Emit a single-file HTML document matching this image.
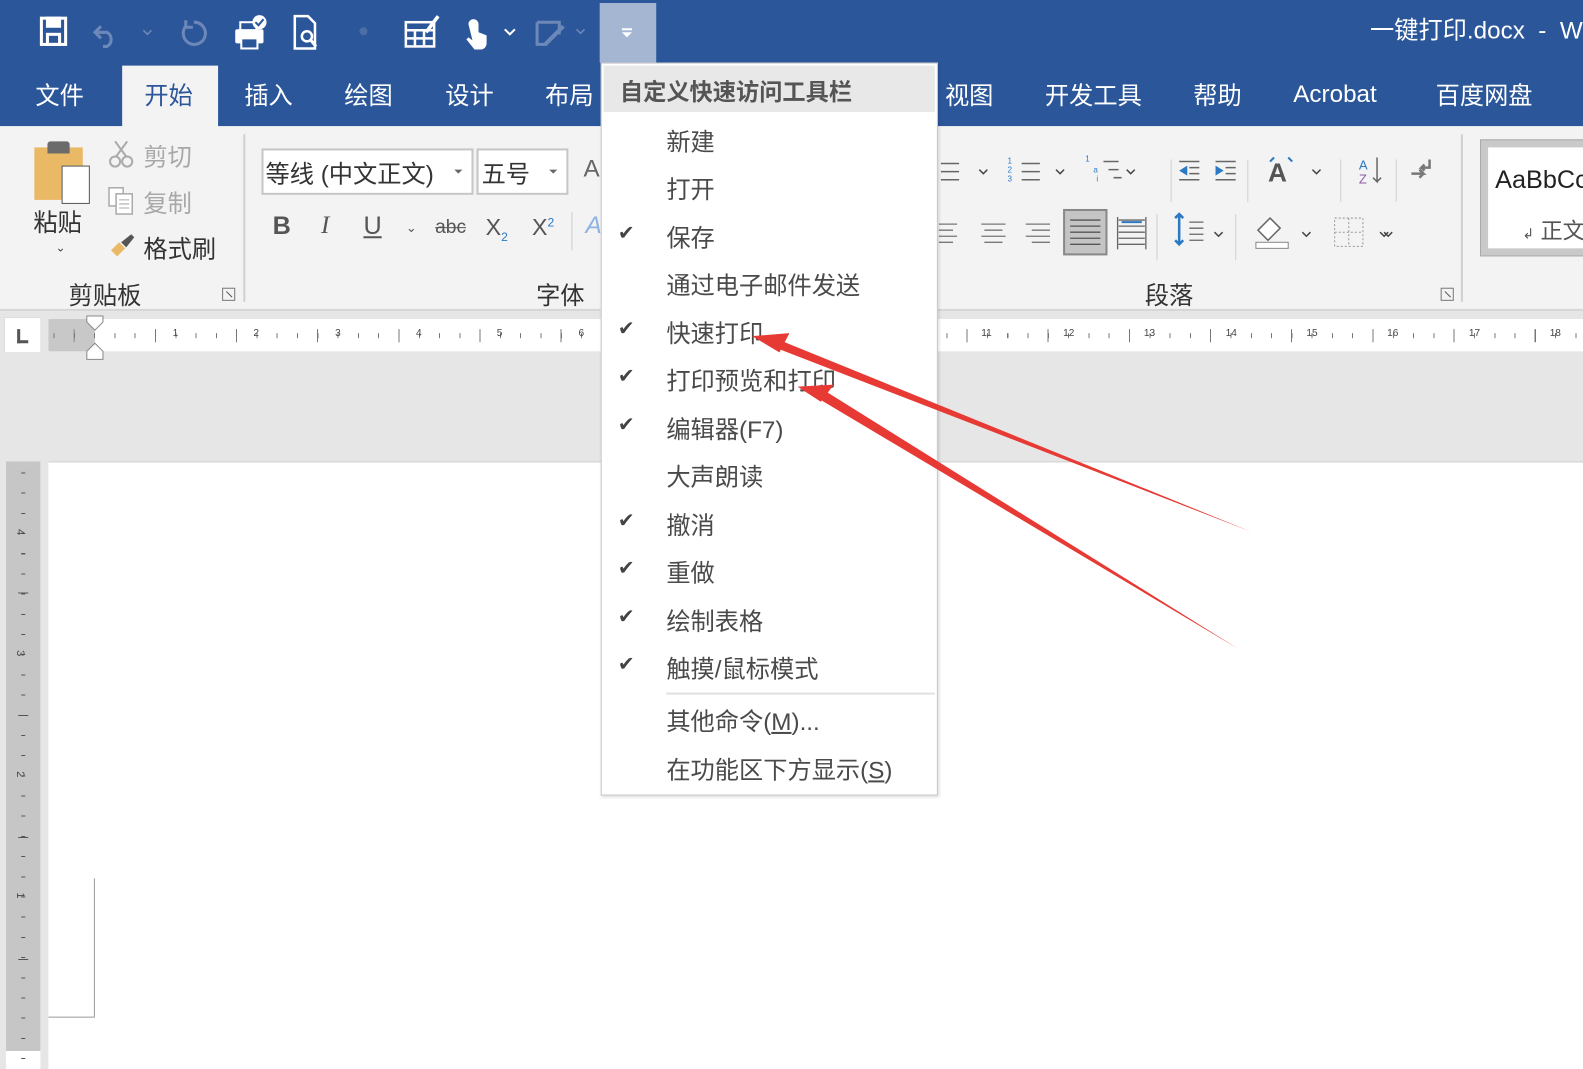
<!DOCTYPE html>
<html><head><meta charset="utf-8"><style>
*{margin:0;padding:0;box-sizing:border-box}
html,body{width:1583px;height:1069px;overflow:hidden;background:#e6e6e6}
#w{position:absolute;left:0;top:0;width:1568px;height:1059px;transform:scale(1.00957);transform-origin:0 0;font-family:"Liberation Sans","Noto Sans CJK SC",sans-serif}
.a{position:absolute;white-space:nowrap}
.tab{position:absolute;top:75px;font-size:24px;color:#fff}
.gl{font-size:24px;color:#333}
.mi{position:absolute;left:64px;font-size:24px;color:#4a4a4a;margin-top:-3px}
.ck{position:absolute;left:16px;font-size:20px;color:#444;margin-top:-1px}
.num{position:absolute;top:325px;font-size:10px;color:#444}
.dl{position:absolute;width:13px;height:13px;border:1px solid #777}
.dl:after{content:"";position:absolute;left:2px;top:5px;width:8px;height:1px;background:#555;transform:rotate(45deg)}
</style></head><body><div id="w">
<div class="a" style="left:0;top:0;width:1568px;height:125px;background:#2b579a"></div>
<svg class="a" style="left:30px;top:12px" width="580" height="40">
<g fill="none" stroke="#fff" stroke-width="3"><rect x="11" y="6" width="24" height="26"/><rect x="17" y="6" width="12" height="8" fill="#fff"/><rect x="17" y="22" width="12" height="10"/></g>
<path d="M70 14 l-6 6 6 6 M64 20 h12 a8 8 0 0 1 0 14 h-4" fill="none" stroke="#6d88b8" stroke-width="3"/>
<path d="M112 18 l4 4 4-4" fill="none" stroke="#6d88b8" stroke-width="1.5"/>
<path d="M162 10 a11 11 0 1 1 -8 4 M154 8 v7 h7" fill="none" stroke="#6d88b8" stroke-width="3"/>
<g fill="#fff"><rect x="203" y="17" width="28" height="14" rx="2"/><rect x="208" y="10" width="16" height="8" fill="none" stroke="#fff" stroke-width="2"/><rect x="209" y="26" width="16" height="10" fill="#2b579a" stroke="#fff" stroke-width="2"/><circle cx="227" cy="10" r="7"/></g>
<path d="M223 10 l3 3 5-6" stroke="#2b579a" stroke-width="2" fill="none"/>
<path d="M262 4 h13 l7 7 v25 h-20z" fill="none" stroke="#fff" stroke-width="2.5"/><circle cx="274" cy="24" r="5" fill="none" stroke="#fff" stroke-width="2.5"/><path d="M278 28 l5 6" stroke="#fff" stroke-width="3"/>
<circle cx="330" cy="19" r="4" fill="#4c6ea6"/>
<g stroke="#fff" stroke-width="2.5" fill="none"><rect x="372" y="10" width="28" height="24"/><path d="M372 18h28M381 18v16M390 18v16M372 26h28"/><path d="M392 20 l12-16" stroke-width="3.5"/></g>
<path d="M434 12 a5 5 0 0 1 10 0 v8 l8 3 v8 a6 6 0 0 1 -6 6 h-6 l-8 -10 2-2 4 3z" fill="#fff"/>
<path d="M470 17 l5 5 5-5" stroke="#fff" stroke-width="2" fill="none"/>
<path d="M502 10 h22 v12 M502 10 v22 h10" fill="none" stroke="#6d88b8" stroke-width="3"/><path d="M510 32 l18-18" stroke="#6d88b8" stroke-width="4"/>
<path d="M541 17 l4 4 4-4" fill="none" stroke="#6d88b8" stroke-width="1.5"/>
</svg>
<div class="a" style="left:594px;top:3px;width:56px;height:59px;background:#a4b6d2"></div>
<div class="a" style="left:616px;top:28px;width:10px;height:2px;background:#fff"></div>
<div class="a" style="left:616px;top:32px;width:0;height:0;border-left:5px solid transparent;border-right:5px solid transparent;border-top:5px solid #fff"></div>
<div class="a" style="left:1357px;top:10px;font-size:24px;color:#fff">一键打印.docx &nbsp;- &nbsp;W</div>
<div class="a" style="left:121px;top:65px;width:95px;height:61px;background:#f3f3f3"></div>
<div class="tab" style="left:35px">文件</div>
<div class="tab" style="left:143px;color:#2b579a">开始</div>
<div class="tab" style="left:242px">插入</div>
<div class="tab" style="left:341px">绘图</div>
<div class="tab" style="left:441px">设计</div>
<div class="tab" style="left:540px">布局</div>
<div class="tab" style="left:936px">视图</div>
<div class="tab" style="left:1035px">开发工具</div>
<div class="tab" style="left:1182px">帮助</div>
<div class="tab" style="left:1281px;top:80px">Acrobat</div>
<div class="tab" style="left:1422px">百度网盘</div>
<div class="a" style="left:0;top:125px;width:1568px;height:183px;background:#f3f3f3;border-bottom:2px solid #d6d6d6"></div>
<div class="a" style="left:34px;top:146px;width:48px;height:52px;background:#e9b966"></div>
<div class="a" style="left:47px;top:140px;width:22px;height:12px;background:#6b6b6b;border-radius:3px 3px 0 0"></div>
<div class="a" style="left:61px;top:164px;width:28px;height:38px;background:#fff;border:1.5px solid #555"></div>
<div class="a gl" style="left:33px;top:201px">粘贴</div>
<div class="a" style="left:55px;top:238px;font-size:12px;color:#444">⌄</div>
<svg class="a" style="left:106px;top:138px" width="30" height="30"><circle cx="8" cy="22" r="5" fill="none" stroke="#aaa" stroke-width="2"/><circle cx="20" cy="22" r="5" fill="none" stroke="#aaa" stroke-width="2"/><path d="M9 17 L20 2 M19 17 L8 2" stroke="#aaa" stroke-width="2"/></svg>
<div class="a" style="left:142px;top:136px;font-size:24px;color:#a8a8a8">剪切</div>
<svg class="a" style="left:106px;top:184px" width="30" height="30"><rect x="2" y="2" width="14" height="18" fill="#fff" stroke="#aaa" stroke-width="1.5"/><rect x="9" y="8" width="16" height="20" fill="#fff" stroke="#aaa" stroke-width="1.5"/><path d="M12 14h10M12 18h10M12 22h10" stroke="#aaa"/></svg>
<div class="a" style="left:142px;top:182px;font-size:24px;color:#a8a8a8">复制</div>
<svg class="a" style="left:106px;top:230px" width="30" height="30"><path d="M4 18 l8 -8 6 6 -8 8z" fill="#e9b966"/><path d="M14 10 l10 -8 3 3 -8 10z" fill="#555"/></svg>
<div class="a gl" style="left:142px;top:227px">格式刷</div>
<div class="a gl" style="left:68px;top:273px">剪贴板</div>
<div class="dl" style="left:220px;top:285px"></div>
<div class="a" style="left:241px;top:133px;width:2px;height:166px;background:#d0d0d0"></div>
<div class="a" style="left:259px;top:147px;width:210px;height:46px;background:#fff;border:2px solid #c6c6c6"></div>
<div class="a gl" style="left:263px;top:153px">等线 (中文正文)</div>
<div class="a" style="left:450px;top:168px;border-left:4px solid transparent;border-right:4px solid transparent;border-top:4px solid #666"></div>
<div class="a" style="left:472px;top:147px;width:91px;height:46px;background:#fff;border:2px solid #c6c6c6"></div>
<div class="a gl" style="left:477px;top:153px">五号</div>
<div class="a" style="left:544px;top:168px;border-left:4px solid transparent;border-right:4px solid transparent;border-top:4px solid #666"></div>
<div class="a gl" style="left:578px;top:154px;color:#666">A</div>
<div class="a" style="left:270px;top:210px;font-size:25px;font-weight:bold;color:#555">B</div>
<div class="a" style="left:318px;top:210px;font-size:25px;font-style:italic;font-family:'Liberation Serif',serif;color:#555">I</div>
<div class="a" style="left:360px;top:210px;font-size:25px;text-decoration:underline;color:#555">U</div>
<div class="a" style="left:402px;top:218px;font-size:13px;color:#555">⌄</div>
<div class="a" style="left:431px;top:215px;font-size:19px;text-decoration:line-through;color:#555">abc</div>
<div class="a" style="left:481px;top:212px;font-size:23px;color:#555">X<sub style="font-size:12px;color:#2b79c2">2</sub></div>
<div class="a" style="left:527px;top:212px;font-size:23px;color:#555">X<sup style="font-size:12px;color:#2b79c2">2</sup></div>
<div class="a" style="left:566px;top:210px;width:1px;height:38px;background:#ccc"></div>
<div class="a" style="left:580px;top:210px;font-size:24px;font-style:italic;color:#8db3e2">A</div>
<div class="a gl" style="left:531px;top:273px">字体</div>
<svg class="a" style="left:928px;top:140px" width="520" height="125">
<g stroke="#666" stroke-width="1.5"><path d="M4 22h18M4 30h18M4 38h18"/><path d="M84 22h18M84 30h18M84 38h18"/><path d="M165 20h15M170 28h10M175 36h8"/></g>
<g fill="none" stroke="#444" stroke-width="1.5"><path d="M42 28l4 4 4-4M118 28l4 4 4-4M188 28l4 4 4-4M372 28l4 4 4-4M443 90l4 4 4-4M275 90l4 4 4-4M362 90l4 4 4-4M439 90l4 4 4-4"/></g>
<text x="70" y="22" font-size="8" fill="#2b79c2">1</text><text x="70" y="31" font-size="8" fill="#2b79c2">2</text><text x="70" y="40" font-size="8" fill="#2b79c2">3</text>
<text x="147" y="20" font-size="8" fill="#2b79c2">1</text><text x="155" y="31" font-size="8" fill="#2b79c2">a</text><text x="158" y="40" font-size="8" fill="#2b79c2">i</text>
<path d="M232 18v42" stroke="#d0d0d0"/>
<g stroke="#666" stroke-width="1.5"><path d="M240 20h20M250 26h10M250 32h10M240 38h20M276 20h20M286 26h10M286 32h10M276 38h20"/></g>
<path d="M240 29l8-5v10z" fill="#2b79c2"/><path d="M284 29l-8-5v10z" fill="#2b79c2"/>
<path d="M308 18v42" stroke="#d0d0d0"/>
<text x="328" y="40" font-size="26" font-weight="bold" fill="#555">A</text><path d="M330 20l4-4M352 20l-4-4" stroke="#2b79c2" stroke-width="2"/>
<path d="M400 18v42" stroke="#d0d0d0"/>
<text x="418" y="28" font-size="13" fill="#2b79c2">A</text><text x="418" y="42" font-size="13" fill="#8e5ba6">Z</text><path d="M436 16v24l-4-4M436 40l4-4" stroke="#666" fill="none" stroke-width="1.5"/>
<path d="M455 18v42" stroke="#d0d0d0"/>
<path d="M470 32h12l-4-4M482 32l-4 4M488 18v8h-8l3-3M480 26l3 3" stroke="#777" stroke-width="2.5" fill="none"/>
<g stroke="#777" stroke-width="1.3"><path d="M2 82h18M2 88h14M2 94h18M2 100h14"/><path d="M44 82h24M47 88h18M44 94h24M47 100h18"/><path d="M88 82h24M94 88h18M88 94h24M94 100h18"/></g>
<rect x="126" y="68" width="42" height="44" fill="#c4c4c4" stroke="#888" stroke-width="2"/>
<g stroke="#555" stroke-width="1.3"><path d="M132 78h30M132 84h30M132 90h30M132 96h30M132 102h30"/></g>
<g stroke="#666" stroke-width="1.3"><path d="M180 78h26M180 84h26M180 90h26M180 96h26M180 102h26M179 75v32M207 75v32"/></g><path d="M183 80h20" stroke="#2b79c2" stroke-width="2"/>
<path d="M218 72v46" stroke="#d0d0d0"/>
<path d="M240 72v30M236 76l4-4 4 4M236 98l4 4 4-4" stroke="#2b79c2" stroke-width="2.5" fill="none"/><path d="M250 80h14M250 86h14M250 92h14M250 98h14" stroke="#666" stroke-width="1.3"/>
<path d="M296 72v46" stroke="#d0d0d0"/>
<path d="M318 88l12-12 10 10-12 12z" fill="#fff" stroke="#666" stroke-width="1.5"/><rect x="316" y="100" width="32" height="6" fill="#fff" stroke="#888"/>
<rect x="394" y="76" width="28" height="28" fill="none" stroke="#999" stroke-dasharray="2 2"/><path d="M408 76v28M394 90h28" stroke="#999" stroke-dasharray="2 2"/>
</svg>
<div class="a gl" style="left:1134px;top:273px">段落</div>
<div class="dl" style="left:1427px;top:285px"></div>
<div class="a" style="left:1447px;top:133px;width:2px;height:166px;background:#d0d0d0"></div>
<div class="a" style="left:1466px;top:138px;width:110px;height:116px;background:#c9c9c9;border:1px solid #aaa"></div>
<div class="a" style="left:1474px;top:146px;width:100px;height:100px;background:#fff"></div>
<div class="a" style="left:1481px;top:164px;font-size:25px;color:#222">AaBbCc</div>
<div class="a" style="left:1508px;top:211px;font-size:22px;color:#555"><span style="font-size:14px">↲</span> 正文</div>
<div class="a" style="left:4px;top:314px;width:37px;height:36px;background:#fff;border:1px solid #ddd"></div>
<div class="a" style="left:17px;top:326px;width:3px;height:14px;background:#555"></div>
<div class="a" style="left:17px;top:337px;width:11px;height:3px;background:#555"></div>
<div class="a" style="left:48px;top:316px;width:1520px;height:32px;background:#fff"></div>
<div class="a" style="left:48px;top:316px;width:46px;height:32px;background:#c8c8c8"></div>
<div class="a" style="left:53px;top:330px;width:1515px;height:5px;background:repeating-linear-gradient(90deg,#777 0 1px,transparent 1px 20.1px)"></div>
<div class="a" style="left:73px;top:326px;width:1495px;height:13px;background:repeating-linear-gradient(90deg,#777 0 1px,transparent 1px 80.4px)"></div>
<svg class="a" style="left:85px;top:312px" width="18" height="46"><path d="M1 1h16v6l-8 8-8-8z" fill="#fff" stroke="#888"/><path d="M1 36l8-8 8 8v8h-16z" fill="#fff" stroke="#888"/></svg>
<div class="num" style="left:171px">1</div><div class="num" style="left:251px">2</div><div class="num" style="left:332px">3</div><div class="num" style="left:412px">4</div><div class="num" style="left:492px">5</div><div class="num" style="left:573px">6</div>
<div class="num" style="left:972px">11</div><div class="num" style="left:1053px">12</div><div class="num" style="left:1133px">13</div><div class="num" style="left:1214px">14</div><div class="num" style="left:1294px">15</div><div class="num" style="left:1374px">16</div><div class="num" style="left:1455px">17</div><div class="num" style="left:1535px">18</div>
<div class="a" style="left:48px;top:457px;width:1520px;height:602px;background:#fff;border-top:1px solid #ccc"></div>
<div class="a" style="left:6px;top:457px;width:34px;height:602px;background:#fff"></div>
<div class="a" style="left:6px;top:457px;width:34px;height:584px;background:#c6c6c6"></div>
<div class="a" style="left:21px;top:457px;width:4px;height:602px;background:repeating-linear-gradient(180deg,transparent 0 11px,#555 11px 12px,transparent 12px 20px)"></div>
<div class="a" style="left:18px;top:467px;width:10px;height:560px;background:repeating-linear-gradient(180deg,transparent 0 120px,#555 120px 121px)"></div>
<div class="a" style="left:17px;top:521px;font-size:11px;color:#444;transform:rotate(90deg)">4</div>
<div class="a" style="left:17px;top:641px;font-size:11px;color:#444;transform:rotate(90deg)">3</div>
<div class="a" style="left:17px;top:761px;font-size:11px;color:#444;transform:rotate(90deg)">2</div>
<div class="a" style="left:17px;top:881px;font-size:11px;color:#444;transform:rotate(90deg)">1</div>
<div class="a" style="left:93px;top:870px;width:1px;height:137px;background:#999"></div>
<div class="a" style="left:48px;top:1007px;width:46px;height:1px;background:#999"></div>
<div class="a" style="left:595px;top:62px;width:334px;height:726px;background:#fff;border:1px solid #c6c6c6;box-shadow:1px 2px 3px rgba(0,0,0,.15)">
<div class="a" style="left:2px;top:2px;width:328px;height:46px;background:#e8e8e8"></div>
<div class="a" style="left:18px;top:9px;font-size:23px;font-weight:bold;color:#555">自定义快速访问工具栏</div>
<div class="mi" style="top:61px">新建</div>
<div class="mi" style="top:108px">打开</div>
<div class="ck" style="top:156px">✔</div><div class="mi" style="top:156px">保存</div>
<div class="mi" style="top:203px">通过电子邮件发送</div>
<div class="ck" style="top:251px">✔</div><div class="mi" style="top:251px">快速打印</div>
<div class="ck" style="top:298px">✔</div><div class="mi" style="top:298px">打印预览和打印</div>
<div class="ck" style="top:346px">✔</div><div class="mi" style="top:346px">编辑器(F7)</div>
<div class="mi" style="top:393px">大声朗读</div>
<div class="ck" style="top:441px">✔</div><div class="mi" style="top:441px">撤消</div>
<div class="ck" style="top:488px">✔</div><div class="mi" style="top:488px">重做</div>
<div class="ck" style="top:536px">✔</div><div class="mi" style="top:536px">绘制表格</div>
<div class="ck" style="top:583px">✔</div><div class="mi" style="top:583px">触摸/鼠标模式</div>
<div class="a" style="left:64px;top:623px;width:266px;height:2px;background:#e0e0e0"></div>
<div class="mi" style="top:635px">其他命令(<u>M</u>)...</div>
<div class="mi" style="top:683px">在功能区下方显示(<u>S</u>)</div>
</div>
<svg class="a" style="left:0;top:0" width="1568" height="1059">
<polygon points="1240,527 770,336 767,344" fill="#e83a35"/>
<polygon points="745,333 782,330 772,349" fill="#e83a35"/>
<polygon points="1227,643 812,384 806,392" fill="#e83a35"/>
<polygon points="790,383 826,381 813,398" fill="#e83a35"/>
</svg>
</div></body></html>
